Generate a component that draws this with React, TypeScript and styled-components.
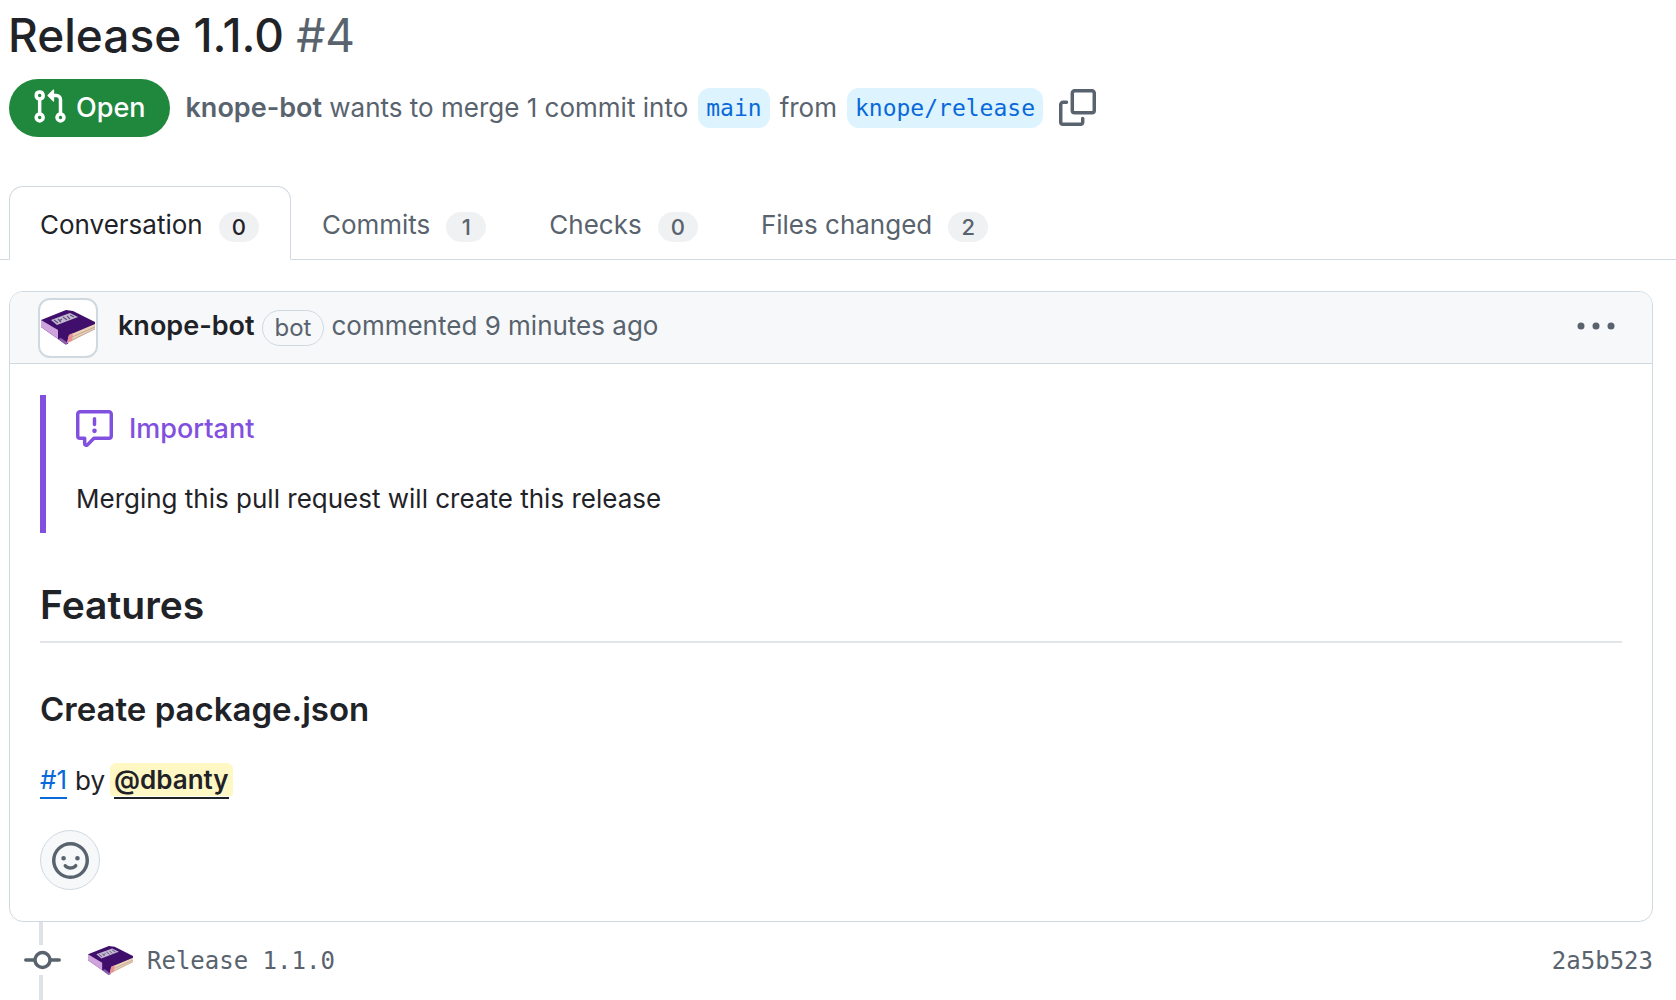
import React from "react";
import styled, { createGlobalStyle } from "styled-components";

const sans = `Inter, "Liberation Sans", sans-serif`;
const mono = `"DejaVu Sans Mono", "Liberation Mono", monospace`;
const c = {
  fg: "#1f2328",
  muted: "#59636e",
  line: "#d1d9e0",
  subtle: "#f6f8fa",
  blue: "#0969da",
  purple: "#8250df",
};

const Global = createGlobalStyle`
  * { box-sizing: border-box; }
  body { margin: 0; background: #fff; color: ${c.fg}; font: 400 26px/40px ${sans}; }
  h1, h2, h3, p { margin: 0; }
  button { font: inherit; color: inherit; padding: 0; border: 0; background: none; cursor: pointer; display: inline-flex; }
  a { color: inherit; text-decoration: none; }
  svg { display: block; flex: none; }
`;

const Page = styled.div`
  height: 100vh;
  overflow: hidden;
`;

const Header = styled.header`
  padding: 3px 23px 0 8px;
`;
const Title = styled.h1`
  font-size: 46px;
  line-height: 64px;
  font-weight: 500;
  span { color: ${c.muted}; font-weight: 400; }
`;
const Meta = styled.div`
  display: flex;
  align-items: center;
  gap: 16px;
  margin: 12px 0 0 1px;
  color: ${c.muted};
`;
const StateLabel = styled.span`
  display: inline-flex;
  align-items: center;
  gap: 8px;
  height: 58px;
  padding: 0 24px 0 22px;
  border-radius: 29px;
  background: #1f883d;
  color: #fff;
  font-size: 27px;
  font-weight: 500;
  svg { margin-bottom: 4px; }
`;
const MergeInfo = styled.div`
  display: flex;
  align-items: center;
  gap: 10px;
`;
const Author = styled.a`
  font-size: 27px;
  font-weight: 600;
`;
const Branch = styled.a`
  height: 40px;
  padding: 0 8px;
  border-radius: 12px;
  background: #ddf4ff;
  color: ${c.blue};
  font: 23px/40px ${mono};
`;
const CopyButton = styled.button`
  margin-bottom: 2px;
`;

const Tabs = styled.nav`
  display: flex;
  margin-top: 49px;
  padding-left: 9px;
  border-bottom: 1px solid ${c.line};
`;
const Tab = styled.a<{ $active?: boolean }>`
  display: flex;
  align-items: center;
  gap: 16px;
  height: 74px;
  margin-bottom: -1px;
  padding: 3px 31px 0 30px;
  border: 1px solid ${(p) => (p.$active ? c.line : "transparent")};
  border-bottom-color: ${(p) => (p.$active ? "#fff" : "transparent")};
  border-radius: 14px 14px 0 0;
  color: ${(p) => (p.$active ? c.fg : c.muted)};
`;
const Counter = styled.span`
  min-width: 40px;
  margin-top: 4px;
  padding: 0 13px;
  border-radius: 15px;
  background: #eff1f3;
  font-size: 22px;
  line-height: 30px;
  font-weight: 500;
  text-align: center;
`;

const Main = styled.main`
  padding: 31px 23px 0 9px;
`;
const Comment = styled.article`
  border: 1px solid ${c.line};
  border-radius: 14px;
`;
const CommentHeader = styled.header`
  display: flex;
  align-items: center;
  height: 72px;
  padding: 0 37px 0 28px;
  border-bottom: 1px solid ${c.line};
  border-radius: 13px 13px 0 0;
  background: ${c.subtle};
  color: ${c.muted};
`;
const Avatar = styled.span`
  display: flex;
  align-items: center;
  justify-content: center;
  width: 60px;
  height: 60px;
  margin-right: 20px;
  border: 2px solid ${c.line};
  border-radius: 12px;
  background: #fff;
`;
const CommentBy = styled.div`
  display: flex;
  align-items: center;
  gap: 7px;
  flex: 1;
  margin-bottom: 4px;
  strong { color: ${c.fg}; font-size: 27px; font-weight: 600; }
`;
const BotLabel = styled.span`
  margin-top: 4px;
  padding: 0 12px;
  border: 1px solid ${c.line};
  border-radius: 18px;
  font-size: 24px;
  line-height: 34px;
`;
const MenuButton = styled.button`
  margin-bottom: 4px;
`;
const Body = styled.div`
  padding: 31px 30px;
`;
const Alert = styled.blockquote`
  margin: 0;
  padding: 14px 0 14px 30px;
  border-left: 6px solid ${c.purple};
`;
const AlertTitle = styled.p`
  display: flex;
  align-items: center;
  gap: 16px;
  margin-bottom: 30px;
  color: ${c.purple};
  font-size: 27px;
  font-weight: 500;
  svg { margin-bottom: 2px; }
`;
const Section = styled.h2`
  margin-top: 46px;
  padding-bottom: 10px;
  border-bottom: 2px solid #e2e6ea;
  font-size: 39px;
  line-height: 52px;
  font-weight: 600;
`;
const Entry = styled.h3`
  margin: 45px 0 31px;
  font-size: 33px;
  line-height: 42px;
  font-weight: 600;
`;
const Line = styled.p`
  display: flex;
  align-items: center;
`;
const IssueLink = styled.a`
  margin-right: 8px;
  border-bottom: 2px solid ${c.blue};
  color: ${c.blue};
  line-height: 34px;
`;
const Mention = styled.a`
  margin-left: 5px;
  padding: 0 4px;
  border-radius: 6px;
  background: linear-gradient(#fff8c5, #fff8c5) 0 0 / 100% 33px no-repeat;
  font-weight: 600;
  span { display: block; line-height: 34px; border-bottom: 2px solid ${c.fg}; }
`;
const ReactButton = styled.button`
  && { border: 1px solid ${c.line}; background: ${c.subtle}; }
  align-items: center;
  justify-content: center;
  width: 60px;
  height: 60px;
  margin-top: 29px;
  border-radius: 50%;
  color: ${c.muted};
`;

const Timeline = styled.div`
  display: flex;
  align-items: center;
  padding-left: 15px;
  color: ${c.muted};
  font: 24px/32px ${mono};
`;
const Rail = styled.div`
  width: 37px;
  margin-right: 27px;
`;
const RailLine = styled.div<{ $length: number }>`
  width: 4px;
  height: ${(p) => p.$length}px;
  margin-left: 15px;
  background: #dfe3e8;
`;
const CommitTitle = styled.a`
  flex: 1;
  margin-left: 14px;
`;

const icons = {
  pull: "M1.5 3.25a2.25 2.25 0 1 1 3 2.122v5.256a2.251 2.251 0 1 1-1.5 0V5.372A2.25 2.25 0 0 1 1.5 3.25Zm5.677-.177L9.573.677A.25.25 0 0 1 10 .854V2.5h1A2.5 2.5 0 0 1 13.5 5v5.628a2.251 2.251 0 1 1-1.5 0V5a1 1 0 0 0-1-1h-1v1.646a.25.25 0 0 1-.427.177L7.177 3.427a.25.25 0 0 1 0-.354ZM3.75 2.5a.75.75 0 1 0 0 1.5.75.75 0 0 0 0-1.5Zm0 9.5a.75.75 0 1 0 0 1.5.75.75 0 0 0 0-1.5Zm8.25.75a.75.75 0 1 0 1.5 0 .75.75 0 0 0-1.5 0Z",
  copy: "M0 6.75C0 5.784.784 5 1.75 5h1.5a.75.75 0 0 1 0 1.5h-1.5a.25.25 0 0 0-.25.25v7.5c0 .138.112.25.25.25h7.5a.25.25 0 0 0 .25-.25v-1.5a.75.75 0 0 1 1.5 0v1.5A1.75 1.75 0 0 1 9.25 16h-7.5A1.75 1.75 0 0 1 0 14.25ZM5 1.75C5 .784 5.784 0 6.75 0h7.5C15.216 0 16 .784 16 1.75v7.5A1.75 1.75 0 0 1 14.25 11h-7.5A1.75 1.75 0 0 1 5 9.25Zm1.75-.25a.25.25 0 0 0-.25.25v7.5c0 .138.112.25.25.25h7.5a.25.25 0 0 0 .25-.25v-7.5a.25.25 0 0 0-.25-.25Z",
  report: "M0 1.75C0 .784.784 0 1.75 0h12.5C15.216 0 16 .784 16 1.75v9.5A1.75 1.75 0 0 1 14.25 13H8.06l-2.573 2.573A1.458 1.458 0 0 1 3 14.543V13H1.75A1.75 1.75 0 0 1 0 11.25Zm1.75-.25a.25.25 0 0 0-.25.25v9.5c0 .138.112.25.25.25h2a.75.75 0 0 1 .75.75v2.19l2.72-2.72a.749.749 0 0 1 .53-.22h6.5a.25.25 0 0 0 .25-.25v-9.5a.25.25 0 0 0-.25-.25Zm7 2.25v2.5a.75.75 0 0 1-1.5 0v-2.5a.75.75 0 0 1 1.5 0ZM9 9a1 1 0 1 1-2 0 1 1 0 0 1 2 0Z",
  smiley: "M8 0a8 8 0 1 1 0 16A8 8 0 0 1 8 0ZM1.5 8a6.5 6.5 0 1 0 13 0 6.5 6.5 0 0 0-13 0Zm3.82 1.636a.75.75 0 0 1 1.038.175l.007.009c.103.118.22.222.35.31.264.178.683.37 1.285.37.602 0 1.02-.192 1.285-.371.13-.088.247-.192.35-.31l.007-.008a.75.75 0 0 1 1.222.87c-.2.28-.45.5-.728.69-.474.322-1.18.63-2.136.63-.946 0-1.652-.308-2.126-.63a3.331 3.331 0 0 1-.736-.685.75.75 0 0 1 .183-1.044ZM12 7a1 1 0 1 1-2 0 1 1 0 0 1 2 0ZM5 8a1 1 0 1 1 0-2 1 1 0 0 1 0 2Z",
  commit: "M11.93 8.75a4.002 4.002 0 0 1-7.86 0H.75a.75.75 0 0 1 0-1.5h3.32a4.002 4.002 0 0 1 7.86 0h3.32a.75.75 0 0 1 0 1.5ZM10.5 8a2.5 2.5 0 1 0-5 0 2.5 2.5 0 0 0 5 0Z",
};

const Icon = ({ name, height = 37, viewBox = "0 0 16 16" }: { name: keyof typeof icons; height?: number; viewBox?: string }) => (
  <svg width={37} height={height} viewBox={viewBox} fill="currentColor" fillRule="evenodd" aria-hidden="true">
    <path d={icons[name]} />
  </svg>
);

const Book = ({ width }: { width: number }) => (
  <svg width={width} viewBox="0 0 54 35" aria-hidden="true">
    <path d="M0 10 25 0 32 1 54 12 54 15 28 26 27 34 24 34 0 17Z" fill="#3f0f6b" />
    <path d="M0 10 17 20 17 29 0 17Z" fill="#cfa3dc" />
    <path d="M17 29 25 35 27 33 20 28Z" fill="#8d5fae" />
    <path d="M28 25 54 14 54 19 29 32 26 33Z" fill="#ead3b6" />
    <path d="M28 25 32 23 31 31 26 33Z" fill="#ea8f93" />
    <path d="M31 27 54 17M31 30 54 19" stroke="#b89b8c" strokeWidth=".8" />
    <path d="M10 10 29 3 37 7 16 15Z" fill="#c3bad2" />
    <path d="M13 10 17 13M17 9 20 12M18 11 21 9M22 7 26 10M26 6 29 9M29 5 33 7" stroke="#62507d" strokeWidth="1.1" />
  </svg>
);

const tabs = [
  ["Conversation", 0],
  ["Commits", 1],
  ["Checks", 0],
  ["Files changed", 2],
] as const;

export default function App() {
  return (
    <Page>
      <Global />
      <Header>
        <Title>Release 1.1.0 <span>#4</span></Title>
        <Meta>
          <StateLabel><Icon name="pull" />Open</StateLabel>
          <MergeInfo>
            <span><Author href="#author">knope-bot</Author> wants to merge 1 commit into</span>
            <Branch href="#main">main</Branch>
            <span>from</span>
            <Branch href="#release">knope/release</Branch>
          </MergeInfo>
          <CopyButton aria-label="Copy branch name"><Icon name="copy" /></CopyButton>
        </Meta>
      </Header>
      <Tabs aria-label="Pull request">
        {tabs.map(([label, count], i) => (
          <Tab key={label} href={`#tab-${i}`} $active={i === 0} aria-current={i === 0 ? "page" : undefined}>
            {label}<Counter>{count}</Counter>
          </Tab>
        ))}
      </Tabs>
      <Main>
        <Comment>
          <CommentHeader>
            <Avatar><Book width={54} /></Avatar>
            <CommentBy>
              <strong>knope-bot</strong>
              <BotLabel>bot</BotLabel>
              <span>commented 9 minutes ago</span>
            </CommentBy>
            <MenuButton aria-label="Show options">
              <svg width="38" height="8" viewBox="0 0 38 8" fill="currentColor" aria-hidden="true">
                <circle cx="4" cy="4" r="3.5" /><circle cx="19" cy="4" r="3.5" /><circle cx="34" cy="4" r="3.5" />
              </svg>
            </MenuButton>
          </CommentHeader>
          <Body>
            <Alert>
              <AlertTitle><Icon name="report" />Important</AlertTitle>
              <p>Merging this pull request will create this release</p>
            </Alert>
            <Section>Features</Section>
            <Entry>Create package.json</Entry>
            <Line>
              <IssueLink href="#issue-1">#1</IssueLink>by
              <Mention href="#dbanty"><span>@dbanty</span></Mention>
            </Line>
            <ReactButton aria-label="Add reaction"><Icon name="smiley" /></ReactButton>
          </Body>
        </Comment>
        <Timeline>
          <Rail>
            <RailLine $length={23} />
            <Icon name="commit" height={30} viewBox="0 1.5 16 13" />
            <RailLine $length={25} />
          </Rail>
          <Book width={45} />
          <CommitTitle href="#commit">Release 1.1.0</CommitTitle>
          <a href="#sha">2a5b523</a>
        </Timeline>
      </Main>
    </Page>
  );
}
